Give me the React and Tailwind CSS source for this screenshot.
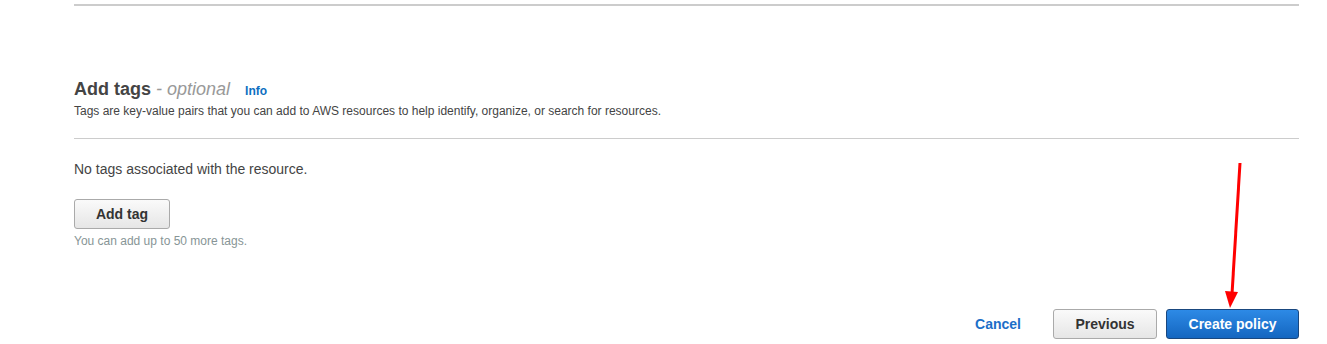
import React from "react";

const App = () => {
  return (
    <div className="relative w-[1327px] h-[344px] bg-white overflow-hidden font-['Liberation_Sans',Arial,sans-serif] text-[#444]">
      <div className="ml-[74px] mr-[28px] pt-[4px]">
        <div className="h-[2px] bg-[#cccccc]" />

        <div className="mt-[71px] flex items-baseline h-[24px] leading-[24px]">
          <h2 className="text-[18px] font-bold text-[#444]">Add tags</h2>
          <span className="ml-[5px] text-[18px] italic text-[#999]">- optional</span>
          <a className="ml-[15px] text-[12px] font-bold text-[#0d6fc1]">Info</a>
        </div>
        <p className="mt-[2px] text-[12px] leading-[16px] text-[#444]">
          Tags are key-value pairs that you can add to AWS resources to help identify, organize, or search for resources.
        </p>

        <div className="mt-[19px] h-px bg-[#cccccc]" />

        <p className="mt-[20px] text-[14px] leading-[20px] text-[#444]">No tags associated with the resource.</p>
        <button className="mt-[20px] w-[96px] h-[30px] rounded-[3px] border border-[#aaaaaa] bg-gradient-to-b from-[#fafafa] to-[#e6e6e6] text-[14px] font-bold text-[#333]">
          Add tag
        </button>
        <p className="mt-[4px] text-[12px] leading-[16px] text-[#879596]">You can add up to 50 more tags.</p>

        <div className="mt-[60px] flex items-center justify-end">
          <a className="text-[14px] font-bold text-[#1c6fc8]">Cancel</a>
          <button className="ml-[32px] w-[104px] h-[30px] rounded-[3px] border border-[#aaaaaa] bg-gradient-to-b from-[#fafafa] to-[#e6e6e6] text-[14px] font-bold text-[#333]">
            Previous
          </button>
          <button className="ml-[9px] w-[133px] h-[30px] rounded-[3px] border border-[#19477f] bg-gradient-to-b from-[#2d8ae6] to-[#1466c0] text-[14px] font-bold text-white">
            Create policy
          </button>
        </div>
      </div>

      <svg className="absolute left-0 top-0 pointer-events-none" width="1327" height="344">
        <line x1="1240" y1="163" x2="1232" y2="294" stroke="#ff0000" strokeWidth="3" />
        <polygon points="1225,291 1238,292 1230,308" fill="#ff0000" />
      </svg>
    </div>
  );
};

export default App;
